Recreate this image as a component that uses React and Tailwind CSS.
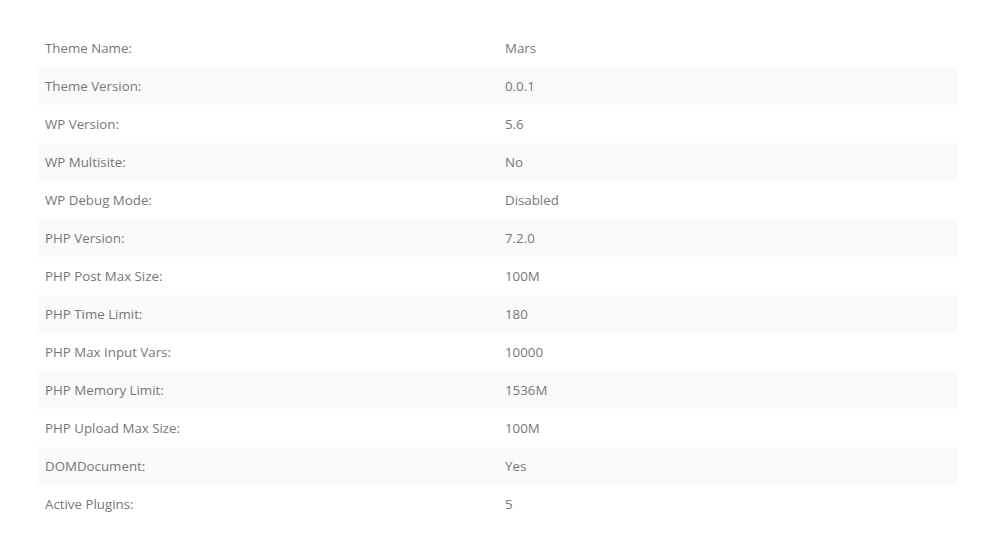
const rows = [
  ['Theme Name:', 'Mars'],
  ['Theme Version:', '0.0.1'],
  ['WP Version:', '5.6'],
  ['WP Multisite:', 'No'],
  ['WP Debug Mode:', 'Disabled'],
  ['PHP Version:', '7.2.0'],
  ['PHP Post Max Size:', '100M'],
  ['PHP Time Limit:', '180'],
  ['PHP Max Input Vars:', '10000'],
  ['PHP Memory Limit:', '1536M'],
  ['PHP Upload Max Size:', '100M'],
  ['DOMDocument:', 'Yes'],
  ['Active Plugins:', '5'],
];

export default function App() {
  return (
    <div className="min-h-screen bg-white pt-[29px] px-[37px] font-['Open_Sans',sans-serif] text-[13.3px] text-[#777]">
      <div className="w-[920px]">
        {rows.map(([label, value], i) => (
          <div key={label} className={`grid grid-cols-2 h-[38px] items-center pt-[2px] ${i % 2 === 1 ? 'bg-[#fafafa]' : ''}`}>
            <div className="pl-2">{label}</div>
            <div className="pl-2">{value}</div>
          </div>
        ))}
      </div>
    </div>
  );
}
